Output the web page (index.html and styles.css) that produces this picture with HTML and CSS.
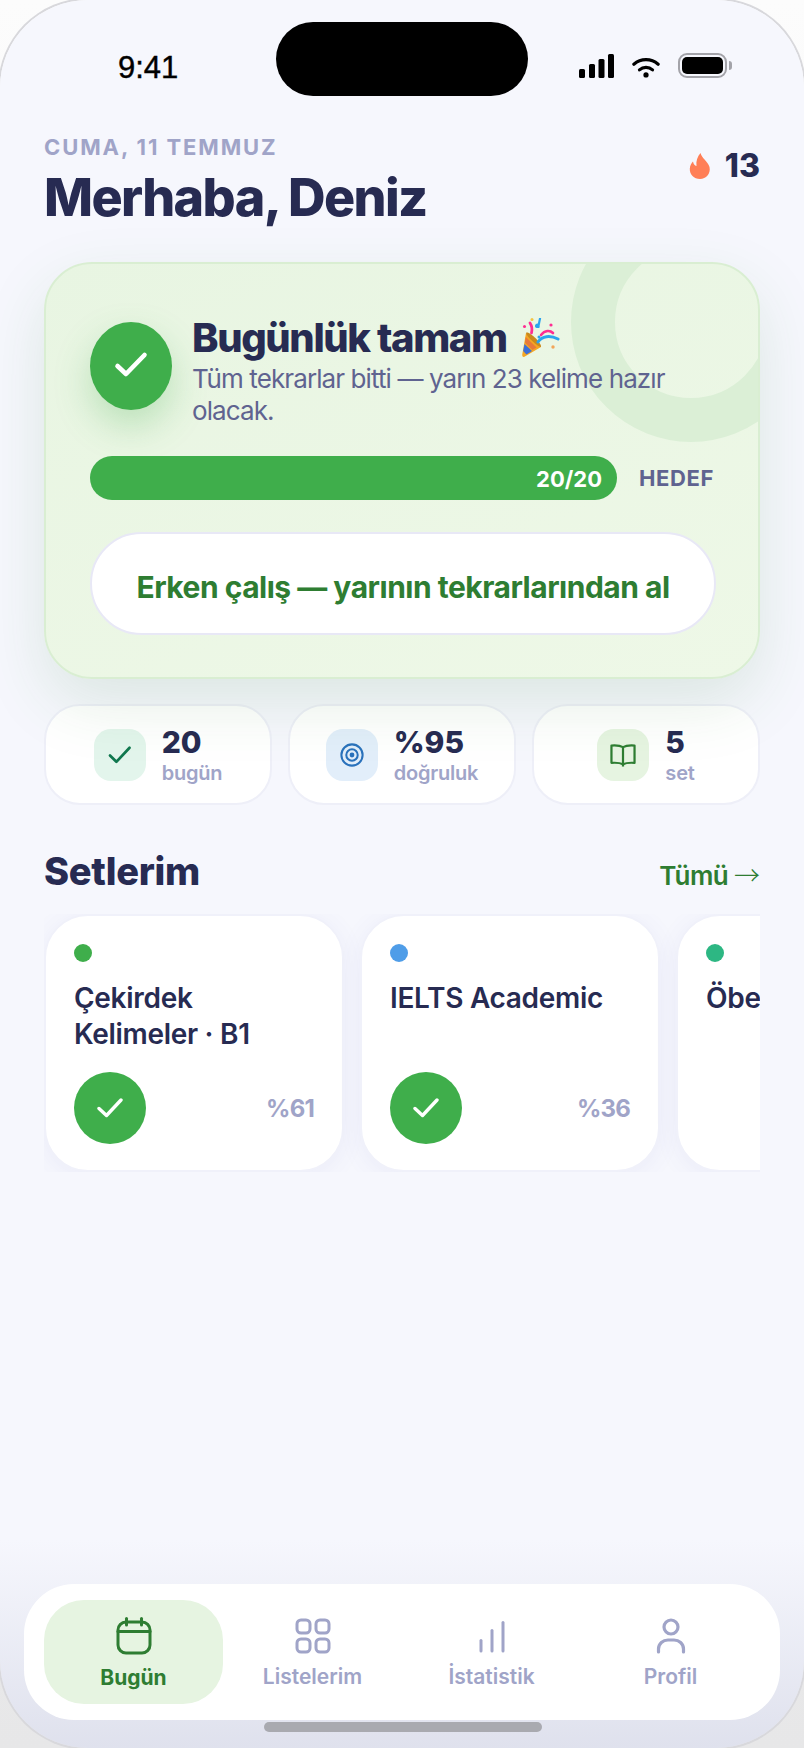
FILE: index.html
```html
<!DOCTYPE html>
<html lang="tr">

    <head>
        <meta charset="UTF-8">
        <meta name="viewport" content="width=device-width, initial-scale=1.0">
        <title>Bugün</title>
        <link rel="stylesheet" href="styles.css">
    </head>

    <body>

        <main class="phone">
            <div class="island"></div>

            <div class="status-bar">
                <span class="status-time">9:41</span>
                <div class="status-icons">
                    <svg width="35" height="24" viewBox="0 0 35 24" fill="#000">
                        <rect x="0" y="15" width="6" height="9" rx="1.5"/>
                        <rect x="10" y="10" width="6" height="14" rx="1.5"/>
                        <rect x="19.500" y="5" width="6" height="19" rx="1.5"/>
                        <rect x="29" y="0" width="6" height="24" rx="1.5"/>
                    </svg>
                    <svg width="28" height="21" viewBox="0 0 30 22" fill="none" stroke="#000" stroke-width="3.4" stroke-linecap="round">
                        <path d="M2 7.5C9.500 1 20.500 1 28 7.500"/>
                        <path d="M8 13.500C12 10 18 10 22 13.500"/>
                        <circle cx="15" cy="19" r="2.800" fill="#000" stroke="none"/>
                    </svg>
                    <div class="battery"><span class="battery-fill"></span></div>
                </div>
            </div>

            <header class="header">
                <div>
                    <div class="header-date">CUMA, 11 TEMMUZ</div>
                    <h1 class="header-title">Merhaba, Deniz</h1>
                </div>
                <div class="streak">
                    <svg width="22" height="26" viewBox="0 0 22 26" fill="#ff7f57">
                        <path d="M11.500 0C12.500 5 19 8.500 20.500 14C22 20.500 17 26 11 26C5 26 0.500 21.500 0.800 15.500C1 12.500 2.500 10 4 8.500C4.500 11 5.500 12.500 7.500 13C6.800 8 8.500 3.500 11.500 0Z"/>
                    </svg>
                    <span>13</span>
                </div>
            </header>

            <section class="hero">
                <div class="hero-ring"></div>
                <div class="hero-top">
                    <div class="hero-check">
                        <svg width="36" height="36" viewBox="0 0 36 36" fill="none" stroke="#fff" stroke-width="4.600" stroke-linecap="round" stroke-linejoin="round">
                            <path d="M4.500 18L13 26L31.500 7"/>
                        </svg>
                    </div>
                    <div class="hero-copy">
                        <h2 class="hero-title">Bugünlük tamam
                            <svg class="popper" width="38" height="40" viewBox="0 0 38 40" fill="none">
                                <path d="M4 15L19 29L2 39C0 39 0 37 0.500 35Z" fill="#f5a623"/>
                                <path d="M2.500 26L10 33L4.500 36.500L1.200 33Z" fill="#3b6fd8"/>
                                <path d="M3.800 19L14.500 29.500L10.500 32L3 24.500Z" fill="#e8793a"/>
                                <path d="M4 15C6 12 20 25 19 29C16 29 5 19 4 15Z" fill="#c98a1e"/>
                                <path d="M8 5C10 8 10.500 11 9.500 15" stroke="#ff2d92" stroke-width="2.800" stroke-linecap="round"/>
                                <path d="M18 0.500L16.500 8C15.500 10 13 8.500 14.500 7C15.500 6 17 7 16.500 9" stroke="#2ba4ee" stroke-width="2.200" stroke-linecap="round"/>
                                <path d="M19 17C23 12 28 12 31 15" stroke="#ff2d92" stroke-width="2.600" stroke-linecap="round"/>
                                <path d="M16 24C20 18 28 17 36 21" stroke="#2ba4ee" stroke-width="3" stroke-linecap="round"/>
                                <circle cx="10" cy="1.500" r="1.500" fill="#f5c542"/>
                                <circle cx="2.500" cy="8.500" r="1.500" fill="#ff2d92"/>
                                <circle cx="29" cy="7" r="1.600" fill="#ff2d92"/>
                                <circle cx="17" cy="19" r="1.500" fill="#2ba4ee"/>
                                <circle cx="31" cy="29" r="1.700" fill="#f2a65a"/>
                            </svg>
                        </h2>
                        <p class="hero-text">Tüm tekrarlar bitti — yarın 23 kelime hazır olacak.</p>
                    </div>
                </div>
                <div class="progress-row">
                    <div class="progress-bar">20/20</div>
                    <span class="progress-label">HEDEF</span>
                </div>
                <button class="hero-button" type="button">Erken çalış — yarının tekrarlarından al</button>
            </section>

            <section class="stats">
                <div class="stat">
                    <div class="stat-icon stat-icon-green">
                        <svg width="24" height="20" viewBox="0 0 26 22" fill="none" stroke="#11784f" stroke-width="3" stroke-linecap="round" stroke-linejoin="round">
                            <path d="M2 11.500L9 18.500L23.500 3"/>
                        </svg>
                    </div>
                    <div>
                        <div class="stat-value">20</div>
                        <div class="stat-label">bugün</div>
                    </div>
                </div>
                <div class="stat">
                    <div class="stat-icon stat-icon-blue">
                        <svg width="24" height="24" viewBox="0 0 26 26" fill="none" stroke="#2a72bc" stroke-width="2.200">
                            <circle cx="13" cy="13" r="11.500"/>
                            <circle cx="13" cy="13" r="6.200"/>
                            <circle cx="13" cy="13" r="2.600" fill="#2a72bc" stroke="none"/>
                        </svg>
                    </div>
                    <div>
                        <div class="stat-value">%95</div>
                        <div class="stat-label">doğruluk</div>
                    </div>
                </div>
                <div class="stat">
                    <div class="stat-icon stat-icon-lime">
                        <svg width="26" height="24" viewBox="0 0 28 26" fill="none" stroke="#2e7d32" stroke-width="2.400" stroke-linejoin="round">
                            <path d="M14 4.500C11 2.800 6 2.500 1.500 2.800V21.500C6 21.200 11 21.500 14 23C17 21.500 22 21.200 26.500 21.500V2.800C22 2.500 17 2.800 14 4.500Z"/>
                            <path d="M14 4.500V25.500"/>
                        </svg>
                    </div>
                    <div>
                        <div class="stat-value">5</div>
                        <div class="stat-label">set</div>
                    </div>
                </div>
            </section>

            <div class="section-head">
                <h2 class="section-title">Setlerim</h2>
                <a class="section-link">Tümü <span class="section-arrow">→</span></a>
            </div>

            <div class="sets">
                <article class="set-card">
                    <span class="set-dot set-dot-green"></span>
                    <h3 class="set-name">Çekirdek Kelimeler · B1</h3>
                    <div class="set-foot">
                        <div class="set-check">
                            <svg width="26" height="22" viewBox="0 0 26 22" fill="none" stroke="#fff" stroke-width="3.400" stroke-linecap="round" stroke-linejoin="round">
                                <path d="M2 11.500L9.500 18.500L24 3"/>
                            </svg>
                        </div>
                        <span class="set-percent">%61</span>
                    </div>
                </article>
                <article class="set-card">
                    <span class="set-dot set-dot-blue"></span>
                    <h3 class="set-name">IELTS Academic</h3>
                    <div class="set-foot">
                        <div class="set-check">
                            <svg width="26" height="22" viewBox="0 0 26 22" fill="none" stroke="#fff" stroke-width="3.400" stroke-linecap="round" stroke-linejoin="round">
                                <path d="M2 11.500L9.500 18.500L24 3"/>
                            </svg>
                        </div>
                        <span class="set-percent">%36</span>
                    </div>
                </article>
                <article class="set-card">
                    <span class="set-dot set-dot-teal"></span>
                    <h3 class="set-name">Öbek Fiiller</h3>
                </article>
            </div>

            <nav class="tabbar">
                <a class="tab tab-active">
                    <svg width="36" height="38" viewBox="0 0 36 38" fill="none" stroke="currentColor" stroke-width="3" stroke-linecap="round">
                        <rect x="2" y="5" width="32" height="31" rx="8"/>
                        <path d="M2 14.500H34"/>
                        <path d="M10.500 1.500V8"/>
                        <path d="M25.500 1.500V8"/>
                    </svg>
                    <span>Bugün</span>
                </a>
                <a class="tab">
                    <svg width="36" height="36" viewBox="0 0 36 36" fill="none" stroke="currentColor" stroke-width="3">
                        <rect x="2" y="2" width="13" height="13" rx="4"/>
                        <rect x="21" y="2" width="13" height="13" rx="4"/>
                        <rect x="2" y="21" width="13" height="13" rx="4"/>
                        <rect x="21" y="21" width="13" height="13" rx="4"/>
                    </svg>
                    <span>Listelerim</span>
                </a>
                <a class="tab">
                    <svg width="36" height="36" viewBox="0 0 36 36" fill="none" stroke="currentColor" stroke-width="3" stroke-linecap="round">
                        <path d="M7 22.500V33"/>
                        <path d="M18 12.500V33"/>
                        <path d="M29 4.500V33"/>
                    </svg>
                    <span>İstatistik</span>
                </a>
                <a class="tab">
                    <svg width="36" height="36" viewBox="0 0 36 36" fill="none" stroke="currentColor" stroke-width="3.200" stroke-linecap="round">
                        <circle cx="18" cy="9" r="7"/>
                        <path d="M5.500 34V31C5.500 25.500 10 22 15 22H21C26 22 30.500 25.500 30.500 31V34"/>
                    </svg>
                    <span>Profil</span>
                </a>
            </nav>

            <div class="home-indicator"></div>
        </main>

    </body>

</html>
```

FILE: styles.css
```css
body {
    font-family: Inter, "Noto Sans", sans-serif;
    background: linear-gradient(180deg, #fcfcfc, #e7e7e8);
    margin: 0;
    padding: 0;
    min-height: 1748px;
    overflow: hidden;
    color: #272b52;
}

h1,
h2,
h3,
p {
    margin: 0;
}

.phone {
    position: relative;
    width: 804px;
    height: 1748px;
    box-sizing: border-box;
    padding: 0 44px;
    display: flex;
    flex-direction: column;
    overflow: hidden;
    border-radius: 88px;
    background: linear-gradient(180deg, #f6f7fd 0, #f6f7fd 1540px, #dfe1ed 1748px);
    box-shadow: 0 0 0 2px #d8d8dc;
}

.island {
    position: absolute;
    top: 22px;
    left: 276px;
    width: 252px;
    height: 74px;
    border-radius: 37px;
    background-color: #000;
}

.status-bar {
    height: 134px;
    display: flex;
    justify-content: space-between;
    align-items: flex-start;
    padding: 50px 33px 0 74px;
    box-sizing: border-box;
    flex-shrink: 0;
}

.status-time {
    font-family: "Liberation Sans", sans-serif;
    font-size: 31px;
    font-weight: 400;
    color: #000;
    -webkit-text-stroke: 0.4px #000;
}

.status-icons {
    display: flex;
    align-items: flex-end;
    gap: 18px;
    margin-top: 3px;
}

.battery {
    position: relative;
    width: 49px;
    height: 25px;
    box-sizing: border-box;
    padding: 2px;
    border: 2px solid #a3a3a9;
    border-radius: 9px;
}

.battery::after {
    content: "";
    position: absolute;
    right: -7px;
    top: 6px;
    width: 3px;
    height: 9px;
    border-radius: 0 3px 3px 0;
    background-color: #a3a3a9;
}

.battery-fill {
    display: block;
    height: 100%;
    border-radius: 5px;
    background-color: #000;
}

.header {
    display: flex;
    justify-content: space-between;
    align-items: flex-start;
    flex-shrink: 0;
}

.header-date {
    margin-top: -2px;
    font-size: 22px;
    line-height: 30px;
    font-weight: 700;
    letter-spacing: 1.9px;
    color: #a0a4c8;
}

.header-title {
    margin-top: 4px;
    font-size: 52px;
    line-height: 64px;
    font-weight: 800;
    letter-spacing: -1.6px;
}

.streak {
    display: flex;
    align-items: center;
    gap: 14px;
    margin-top: 14px;
    font-size: 32px;
    line-height: 36px;
    font-weight: 800;
}

.hero {
    position: relative;
    margin-top: 32px;
    flex-shrink: 0;
    height: 417px;
    box-sizing: border-box;
    padding: 58px 44px 0;
    overflow: hidden;
    border: 2px solid #d9eed2;
    border-radius: 48px;
    background: linear-gradient(160deg, #e8f5e2, #eef8e7);
    box-shadow: 0 24px 64px rgba(46, 125, 50, 0.13);
}

.hero-ring {
    position: absolute;
    top: -62px;
    right: -53px;
    width: 240px;
    height: 240px;
    box-sizing: border-box;
    border: 44px solid #dbefd6;
    border-radius: 50%;
}

.hero-top {
    position: relative;
    display: flex;
    align-items: center;
    gap: 20px;
    height: 88px;
}

.hero-check {
    width: 82px;
    height: 88px;
    flex-shrink: 0;
    display: flex;
    justify-content: center;
    align-items: center;
    border-radius: 50%;
    background-color: #3fae4b;
    box-shadow: 0 16px 36px rgba(63, 174, 75, 0.28);
}

.hero-copy {
    padding-top: 8px;
}

.hero-title {
    display: flex;
    align-items: center;
    gap: 15px;
    font-size: 40px;
    line-height: 50px;
    font-weight: 800;
    letter-spacing: -1.4px;
    white-space: nowrap;
}

.hero-text {
    width: 500px;
    font-size: 26px;
    line-height: 32px;
    color: #5f6390;
    letter-spacing: -0.9px;
}

.progress-row {
    position: relative;
    display: flex;
    align-items: center;
    gap: 22px;
    margin-top: 46px;
}

.progress-bar {
    width: 528px;
    height: 44px;
    box-sizing: border-box;
    padding-right: 15px;
    border-radius: 22px;
    background-color: #3fae4b;
    color: #fff;
    text-align: right;
    font-size: 22px;
    line-height: 46px;
    font-weight: 700;
}

.progress-label {
    font-size: 22px;
    font-weight: 700;
    letter-spacing: 0.6px;
    color: #5f6390;
}

.hero-button {
    position: relative;
    display: block;
    width: 626px;
    height: 103px;
    margin-top: 32px;
    padding: 6px 0 0;
    border: 2px solid #e8e8f6;
    border-radius: 52px;
    background-color: #fff;
    color: #2e7d32;
    font-family: inherit;
    font-size: 30px;
    font-weight: 700;
    letter-spacing: -0.5px;
}

.stats {
    display: grid;
    grid-template-columns: repeat(3, 1fr);
    gap: 16px;
    margin-top: 25px;
    flex-shrink: 0;
}

.stat {
    height: 101px;
    box-sizing: border-box;
    display: flex;
    justify-content: center;
    align-items: center;
    gap: 16px;
    border: 2px solid #eeeff8;
    border-radius: 36px;
    background-color: #fff;
}

.stat-icon {
    width: 52px;
    height: 52px;
    display: flex;
    justify-content: center;
    align-items: center;
    border-radius: 17px;
}

.stat-icon-green {
    background-color: #e3f5ec;
}

.stat-icon-blue {
    background-color: #e2eefa;
}

.stat-icon-lime {
    background-color: #e6f4e1;
}

.stat-value {
    font-size: 30px;
    line-height: 34px;
    font-weight: 800;
}

.stat-label {
    margin-top: 2px;
    font-size: 20px;
    line-height: 24px;
    font-weight: 600;
    letter-spacing: -0.2px;
    color: #a0a4c8;
}

.section-head {
    display: flex;
    justify-content: space-between;
    align-items: baseline;
    margin-top: 43px;
    flex-shrink: 0;
}

.section-title {
    font-size: 38px;
    line-height: 46px;
    font-weight: 800;
    letter-spacing: -0.3px;
}

.section-link {
    font-size: 26px;
    font-weight: 600;
    color: #2e7d32;
    letter-spacing: -0.6px;
}

.section-arrow {
    font-family: "Noto Sans CJK JP", sans-serif;
    font-weight: 300;
    letter-spacing: 0;
}

.sets {
    display: flex;
    gap: 16px;
    margin-top: 20px;
    height: 258px;
    overflow: hidden;
    flex-shrink: 0;
}

.set-card {
    width: 300px;
    flex-shrink: 0;
    box-sizing: border-box;
    height: 258px;
    padding: 28px 28px 0;
    border: 2px solid #f0f1fa;
    border-radius: 44px;
    background-color: #fff;
    box-shadow: 0 4px 24px rgba(90, 90, 180, 0.07);
}

.set-dot {
    display: block;
    width: 18px;
    height: 18px;
    border-radius: 50%;
}

.set-dot-green {
    background-color: #3fae4b;
}

.set-dot-blue {
    background-color: #4f9de8;
}

.set-dot-teal {
    background-color: #2db783;
}

.set-name {
    height: 72px;
    margin-top: 18px;
    font-size: 28px;
    line-height: 36px;
    font-weight: 600;
    letter-spacing: -0.3px;
}

.set-foot {
    display: flex;
    justify-content: space-between;
    align-items: center;
    margin-top: 20px;
}

.set-check {
    width: 72px;
    height: 72px;
    display: flex;
    justify-content: center;
    align-items: center;
    border-radius: 50%;
    background-color: #3fae4b;
}

.set-percent {
    font-size: 24px;
    font-weight: 700;
    letter-spacing: -0.8px;
    color: #a0a4c8;
}

.tabbar {
    display: grid;
    grid-template-columns: repeat(4, 1fr);
    height: 136px;
    box-sizing: border-box;
    margin: auto -20px 28px;
    padding: 16px 20px;
    border-radius: 50px;
    background-color: #fff;
    flex-shrink: 0;
}

.tab {
    display: flex;
    flex-direction: column;
    align-items: center;
    justify-content: center;
    gap: 10px;
    padding-top: 4px;
    border-radius: 40px;
    font-size: 21px;
    line-height: 26px;
    font-weight: 600;
    color: #a0a4c8;
}

.tab-active {
    background-color: #e6f4e1;
    color: #2e7d32;
    font-weight: 700;
}

.home-indicator {
    position: absolute;
    left: 264px;
    bottom: 16px;
    width: 278px;
    height: 10px;
    border-radius: 5px;
    background-color: #a9aab0;
}
```
